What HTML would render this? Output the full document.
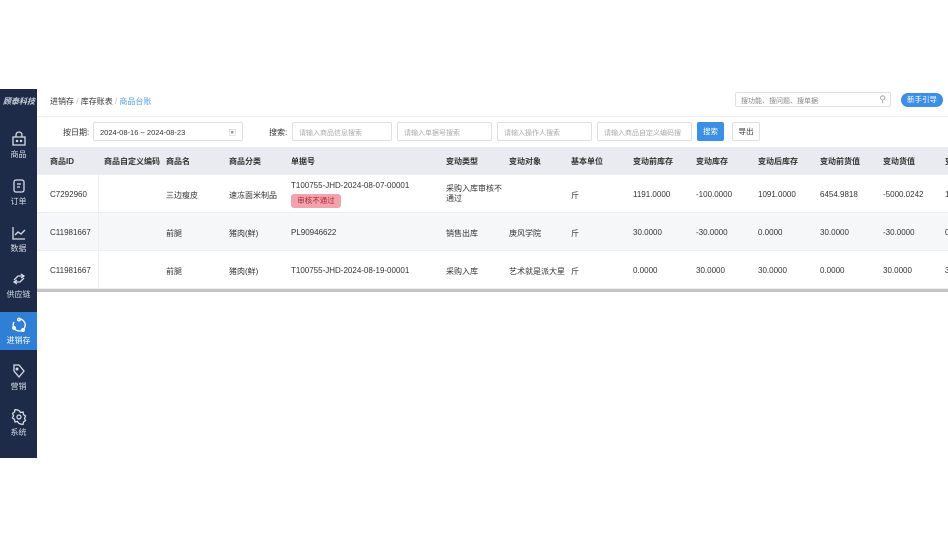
<!DOCTYPE html>
<html><head><meta charset="utf-8"><style>
*{margin:0;padding:0;box-sizing:border-box}
body{width:948px;height:547px;background:#fff;font-family:"Liberation Sans","Noto Sans CJK SC",sans-serif;font-size:8px;color:#333;position:relative;overflow:hidden}
.a{position:absolute;white-space:nowrap}
#side{position:absolute;left:0;top:89px;width:37px;height:369px;background:#1e2b48}
.it{position:absolute;left:0;width:37px;text-align:center;color:#d6dbe6;font-size:8px}
.it svg{display:block;margin:0 auto 2px}
.inp{position:absolute;top:122px;height:19px;border:1px solid #dcdfe6;border-radius:2px;color:#aaa;font-size:7px;padding:5px 0 0 6px;background:#fff}
.row{position:absolute;left:37px;width:911px;border-bottom:1px solid #eceef2}
</style></head><body>
<div id="side">
 <div class="a" style="left:3px;top:7px;color:#c8cfdd;font-size:8px;font-style:italic;font-weight:bold">顾泰科技</div>
 <div class="it" style="top:42px"><svg width="16" height="16" viewBox="0 0 16 16" fill="none" stroke="#d6dbe6" stroke-width="1.3"><path d="M5 6V4a3 3 0 0 1 6 0v2M2 6h12v8H2z"/><circle cx="6" cy="10" r=".6"/><circle cx="10" cy="10" r=".6"/></svg>商品</div>
 <div class="it" style="top:89px"><svg width="16" height="16" viewBox="0 0 16 16" fill="none" stroke="#d6dbe6" stroke-width="1.3"><rect x="3" y="2" width="10" height="12" rx="2"/><path d="M6 6h4M6 9h3"/></svg>订单</div>
 <div class="it" style="top:136px"><svg width="16" height="16" viewBox="0 0 16 16" fill="none" stroke="#d6dbe6" stroke-width="1.3"><path d="M2 2v12h12M4 10l3-3 3 2 4-4"/></svg>数据</div>
 <div class="it" style="top:182px"><svg width="16" height="16" viewBox="0 0 16 16" fill="none" stroke="#d6dbe6" stroke-width="1.3"><path d="M3 9l4-4h6M10 3l3 2-3 2M13 7l-4 4H3M6 13l-3-2 3-2"/></svg>供应链</div>
 <div class="it" style="top:223px;height:38px;background:#2f7fd6;color:#fff;padding-top:5px"><svg width="16" height="16" viewBox="0 0 16 16" fill="none" stroke="#fff" stroke-width="1.3"><path d="M8 2a6 6 0 1 1-5 3"/><circle cx="8" cy="2.5" r="1.3"/><circle cx="3" cy="11" r="1.3"/><circle cx="12" cy="13" r="1.3"/></svg>进销存</div>
 <div class="it" style="top:274px"><svg width="16" height="16" viewBox="0 0 16 16" fill="none" stroke="#d6dbe6" stroke-width="1.3"><path d="M3 2h5l5 6-5 6-5-6z"/><circle cx="6" cy="6" r=".8"/></svg>营销</div>
 <div class="it" style="top:320px"><svg width="16" height="16" viewBox="0 0 16 16" fill="none" stroke="#d6dbe6" stroke-width="1.3"><path d="M8 1.5l1.5 2 2.5-.5.5 2.5 2 1.5-1 2.3 1 2.2-2 1.5-.5 2.5-2.5-.5L8 14.5l-1.5-2-2.5.5-.5-2.5-2-1.5 1-2.2-1-2.3 2-1.5.5-2.5 2.5.5z"/><circle cx="8" cy="8" r="2"/></svg>系统</div>
</div>
<div class="a" style="left:50px;top:96px;font-size:8px">进销存 <span style="color:#bbb">/</span> 库存账表 <span style="color:#bbb">/</span> <span style="color:#5aa0e0">商品台账</span></div>
<div class="a" style="left:735px;top:92px;width:156px;height:15px;border:1px solid #dcdfe6;border-radius:2px;font-size:7px;color:#888;padding:3px 0 0 5px">搜功能、搜问题、搜单据<span style="position:absolute;right:4px;top:1px;font-size:9px;color:#999">&#9906;</span></div>
<div class="a" style="left:901px;top:93px;width:42px;height:14px;background:#3b8fe4;border-radius:7px;color:#fff;font-size:7.5px;text-align:center;line-height:14px">新手引导</div>
<div class="a" style="left:37px;top:116px;width:911px;border-top:1px solid #eceef2"></div>
<div class="a" style="left:63px;top:127px;font-size:8px">按日期:</div>
<div class="inp" style="left:93px;width:150px;color:#333;font-size:7.5px">2024-08-16 ~ 2024-08-23<span style="position:absolute;right:6px;top:4px;color:#999">&#9635;</span></div>
<div class="a" style="left:269px;top:127px;font-size:8px">搜索:</div>
<div class="inp" style="left:292px;width:100px">请输入商品信息搜索</div>
<div class="inp" style="left:397px;width:95px">请输入单据号搜索</div>
<div class="inp" style="left:497px;width:95px">请输入操作人搜索</div>
<div class="inp" style="left:597px;width:95px">请输入商品自定义编码搜</div>
<div class="a" style="left:697px;top:122px;width:27px;height:19px;background:#3b8fe4;color:#fff;font-size:7.5px;text-align:center;line-height:19px;border-radius:2px">搜索</div>
<div class="a" style="left:732px;top:122px;width:28px;height:19px;border:1px solid #dcdfe6;font-size:7.5px;text-align:center;line-height:17px;border-radius:2px">导出</div>
<div class="row" style="top:147px;height:28px;background:#e9ebf0"></div>
<div class="row" style="top:175px;height:38px"></div>
<div class="row" style="top:213px;height:38px;background:#f6f7f9"></div>
<div class="row" style="top:251px;height:38px"></div>
<div class="a" style="left:98px;top:175px;height:114px;border-left:1px solid #eceef2"></div>
<div class="a" style="left:37px;top:289px;width:911px;height:3px;background:#c4c4c4"></div>
<div id="t"></div>
<script>
var cols=[50,104,166,229,291,446,509,571,633,696,758,820,883,945];
var h=["商品ID","商品自定义编码","商品名","商品分类","单据号","变动类型","变动对象","基本单位","变动前库存","变动库存","变动后库存","变动前货值","变动货值","变"];
var r=[["C7292960","","三边瘦皮","速冻面米制品","","","","斤","1191.0000","-100.0000","1091.0000","6454.9818","-5000.0242","1"],
["C11981667","","前腿","猪肉(鲜)","PL90946622","销售出库","庚风学院","斤","30.0000","-30.0000","0.0000","30.0000","-30.0000","0"],
["C11981667","","前腿","猪肉(鲜)","T100755-JHD-2024-08-19-00001","采购入库","艺术就是派大星","斤","0.0000","30.0000","30.0000","0.0000","30.0000","3"]];
var o="";
h.forEach(function(t,i){o+='<div class="a" style="left:'+cols[i]+'px;top:156px;font-weight:bold;font-size:8px;color:#333">'+t+'</div>';});
r.forEach(function(row,j){var y=190+j*38;row.forEach(function(t,i){if(t)o+='<div class="a" style="left:'+cols[i]+'px;top:'+y+'px">'+t+'</div>';});});
o+='<div class="a" style="left:291px;top:181px">T100755-JHD-2024-08-07-00001</div>';
o+='<div class="a" style="left:291px;top:194px;width:50px;height:14px;background:#f2a3ab;border-radius:3px;color:#a8283a;font-size:7.5px;text-align:center;line-height:14px">审核不通过</div>';
o+='<div class="a" style="left:446px;top:184px;line-height:10px">采购入库审核不<br>通过</div>';
document.getElementById("t").innerHTML=o;
</script>
</body></html>
